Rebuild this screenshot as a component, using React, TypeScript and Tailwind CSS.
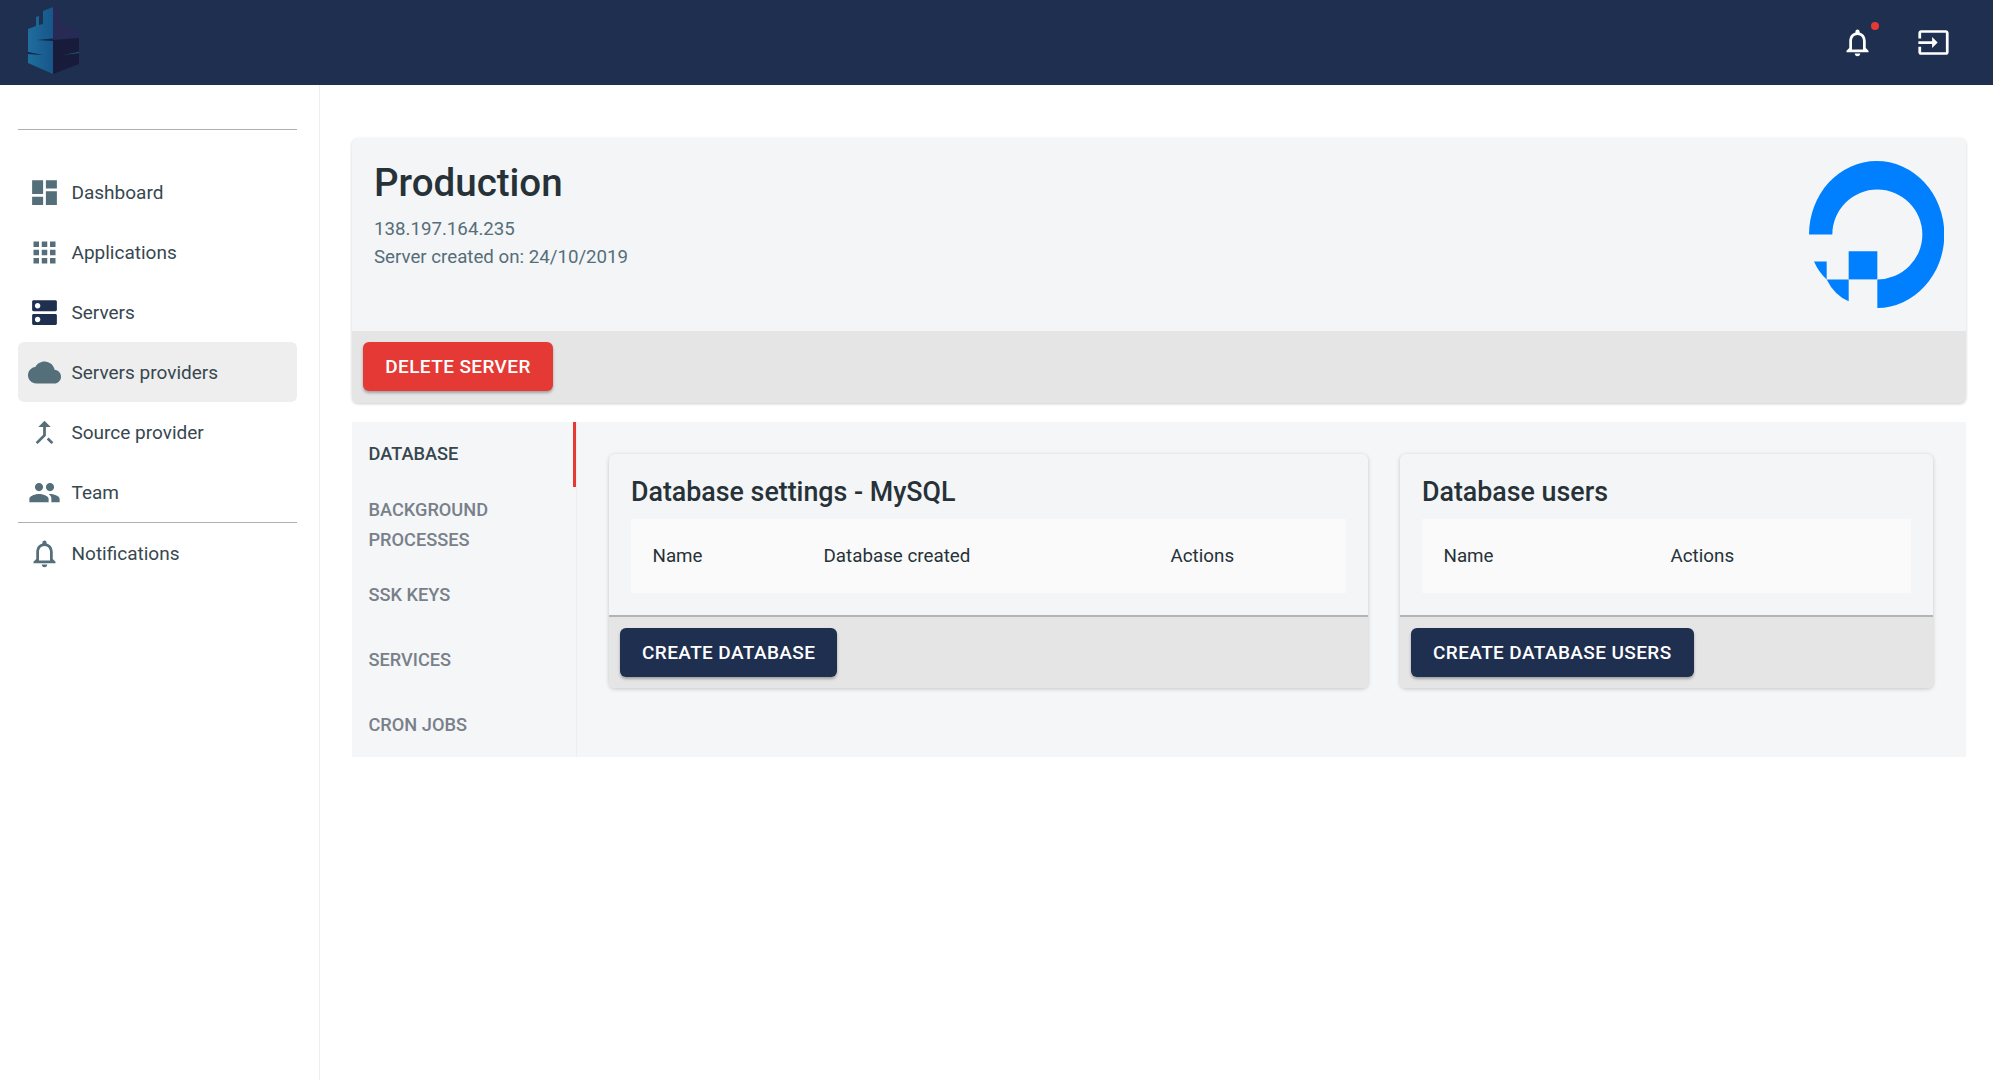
import React from 'react';

const ICONS: Record<string, string> = {
  dashboard: 'M3 13h8V3H3v10zm0 8h8v-6H3v6zm10 0h8V11h-8v10zm0-18v6h8V3h-8z',
  apps: 'M4 8h4V4H4v4zm6 12h4v-4h-4v4zm-6 0h4v-4H4v4zm0-6h4v-4H4v4zm6 0h4v-4h-4v4zm6-10v4h4V4h-4zm-6 4h4V4h-4v4zm6 6h4v-4h-4v4zm0 6h4v-4h-4v4z',
  dns: 'M20 13H4c-.55 0-1 .45-1 1v6c0 .55.45 1 1 1h16c.55 0 1-.45 1-1v-6c0-.55-.45-1-1-1zM7 19c-1.1 0-2-.9-2-2s.9-2 2-2 2 .9 2 2-.9 2-2 2zM20 3H4c-.55 0-1 .45-1 1v6c0 .55.45 1 1 1h16c.55 0 1-.45 1-1V4c0-.55-.45-1-1-1zM7 9c-1.1 0-2-.9-2-2s.9-2 2-2 2 .9 2 2-.9 2-2 2z',
  cloud: 'M19.35 10.04C18.67 6.59 15.64 4 12 4 9.11 4 6.6 5.64 5.35 8.04 2.34 8.36 0 10.91 0 14c0 3.31 2.69 6 6 6h13c2.76 0 5-2.24 5-5 0-2.64-2.05-4.78-4.65-4.96z',
  merge: 'M17 20.41L18.41 19 15 15.59 13.59 17 17 20.41zM7.5 8H11v5.59L5.59 19 7 20.41l6-6V8h3.5L12 3.5 7.5 8z',
  people: 'M16 11c1.66 0 2.99-1.34 2.99-3S17.66 5 16 5c-1.66 0-3 1.34-3 3s1.34 3 3 3zm-8 0c1.66 0 2.99-1.34 2.99-3S9.66 5 8 5C6.34 5 5 6.34 5 8s1.34 3 3 3zm0 2c-2.33 0-7 1.17-7 3.5V19h14v-2.5c0-2.33-4.67-3.5-7-3.5zm8 0c-.29 0-.62.02-.97.05 1.16.84 1.97 1.97 1.97 3.45V19h6v-2.5c0-2.33-4.67-3.5-7-3.5z',
  bell: 'M12 22c1.1 0 2-.9 2-2h-4c0 1.1.89 2 2 2zm6-6v-5c0-3.07-1.64-5.64-4.5-6.32V4c0-.83-.67-1.5-1.5-1.5s-1.5.67-1.5 1.5v.68C7.63 5.36 6 7.92 6 11v5l-2 2v1h16v-1l-2-2zm-2 1H8v-6c0-2.48 1.51-4.5 4-4.5s4 2.02 4 4.5v6z',
  input: 'M21 3.01H3c-1.1 0-2 .9-2 2V9h2V4.99h18v14.03H3V15H1v4.01c0 1.1.9 1.98 2 1.98h18c1.1 0 2-.88 2-1.98v-14c0-1.1-.9-2-2-2zM11 16l4-4-4-4v3H1v2h10v3z',
};

const Icon = ({ name, className }: { name: string; className?: string }) => (
  <svg viewBox="0 0 24 24" className={`w-[33px] h-[33px] fill-current shrink-0 ${className ?? ''}`}>
    <path d={ICONS[name]} />
  </svg>
);

const Logo = () => (
  <svg viewBox="0 0 70 85" className="w-[70px] h-[85px]">
    <defs>
      <linearGradient id="logoLeft" x1="0" y1="0" x2="1" y2="0">
        <stop offset="0" stopColor="#1f6d9e" />
        <stop offset="1" stopColor="#17568a" />
      </linearGradient>
    </defs>
    <path d="M8 29L16 26V17L19 16V25L23 24V11L33 7V74L8 63Z" fill="url(#logoLeft)" />
    <path d="M33 7L40 10V22L43 21L48 28L59 30V38L33 40Z" fill="#272a55" />
    <path d="M33 40L59 38V64L33 74Z" fill="#181c3a" />
    <path d="M17 40L33 38.5V41Z" fill="#14243f" />
    <path d="M8 52L23 55L8 54Z" fill="#14243f" />
    <path d="M43 55L59 52V53Z" fill="#1c6a8a" />
  </svg>
);

const DoLogo = () => (
  <svg viewBox="147 484 405 442" preserveAspectRatio="none" className="w-[135px] h-[147px] fill-[#0080ff]">
    <path d="M147 705A203 221 0 1 1 352 926V840A135 135 0 1 0 217 705Z" />
    <path d="M266 755H352V840H266Z" />
    <path d="M200 840H266V906Q222 886 200 840Z" />
    <path d="M162 786H200V840Q176 818 162 786Z" />
  </svg>
);

const NAV = [
  { label: 'Dashboard', icon: 'dashboard', color: 'text-[#546e7a]' },
  { label: 'Applications', icon: 'apps', color: 'text-[#546e7a]' },
  { label: 'Servers', icon: 'dns', color: 'text-[#1f2f50]' },
  { label: 'Servers providers', icon: 'cloud', color: 'text-[#546e7a]', active: true },
  { label: 'Source provider', icon: 'merge', color: 'text-[#546e7a]' },
  { label: 'Team', icon: 'people', color: 'text-[#546e7a]' },
];

const NavItem = ({ label, icon, color, active }: { label: string; icon: string; color: string; active?: boolean }) => (
  <div className={`h-[60px] flex items-center pl-[10px] rounded-md ${active ? 'bg-[#eeeeee]' : ''}`}>
    <Icon name={icon} className={color} />
    <span className="ml-[10.5px] pt-[2px] text-[19px] text-[#37474f]">{label}</span>
  </div>
);

const TABS = [
  { label: 'DATABASE', cls: 'h-[65px] pb-[2px] text-[#37474f] border-r-[3px] border-[#e53935]' },
  { label: 'BACKGROUND PROCESSES', cls: 'h-[76px] text-[#78808a]' },
  { label: 'SSK KEYS', cls: 'h-[65px] pb-[2px] text-[#78808a]' },
  { label: 'SERVICES', cls: 'h-[65px] pb-[2px] text-[#78808a]' },
  { label: 'CRON JOBS', cls: 'h-[64px] text-[#78808a]' },
];

const DbCard = ({ title, columns, button, className }: { title: string; columns: { label: string; cls: string }[]; button: string; className: string }) => (
  <div className={`rounded-md bg-[#f4f5f7] shadow-[0_1px_4px_rgba(0,0,0,0.2)] overflow-hidden ${className}`}>
    <div className="h-[163px] px-[22px] pt-[21px] border-b-2 border-[#b4b4b4]">
      <h2 className="text-[26.8px] leading-[34px] font-medium text-[#263238]">{title}</h2>
      <div className="mt-[10px] h-[74px] bg-[#fafafa] flex items-center pl-[21.5px] text-[18.8px] text-[#263238]">
        {columns.map(c => (
          <span key={c.label} className={c.cls}>{c.label}</span>
        ))}
      </div>
    </div>
    <div className="h-[71px] bg-[#e5e5e5] px-[11px] pt-[11px]">
      <button className="h-[49px] pt-[1px] px-[22px] rounded-md bg-[#1f2f50] text-white text-[19px] tracking-[0.4px] font-medium uppercase shadow-[0_2px_3px_rgba(0,0,0,0.3)]">
        {button}
      </button>
    </div>
  </div>
);

export default function App() {
  return (
    <div className="min-h-screen flex flex-col bg-white font-['Roboto',sans-serif]">
      <header className="h-[85px] bg-[#1f2f50] flex items-center justify-between pl-[20px] pr-[43px]">
        <Logo />
        <div className="flex items-center gap-[43px]">
          <div className="relative">
            <Icon name="bell" className="text-white" />
            <span className="absolute top-[-4px] right-[-5px] w-[8px] h-[8px] rounded-full bg-[#e53935]" />
          </div>
          <Icon name="input" className="text-white" />
        </div>
      </header>
      <div className="flex flex-1">
        <aside className="w-[320px] border-r border-[#eeeeee] px-[18px] pt-[44px]">
          <div className="w-[279px]">
            <div className="border-t border-[#b0b0b0] mb-[32px]" />
            {NAV.map(n => (
              <NavItem key={n.label} {...n} />
            ))}
            <div className="border-t border-[#b0b0b0]" />
            <NavItem label="Notifications" icon="bell" color="text-[#546e7a]" />
          </div>
        </aside>
        <main className="flex-1 pl-[32px] pr-[27px] pt-[53px]">
          <section className="rounded-md bg-[#f4f5f7] shadow-[0_1px_3px_rgba(0,0,0,0.2)] overflow-hidden">
            <div className="h-[193px] flex justify-between pl-[22px] pr-[22px] pt-[23px]">
              <div>
                <h1 className="text-[38.5px] leading-[44px] font-medium text-[#263238]">Production</h1>
                <p className="mt-[10px] text-[18.7px] leading-[28px] text-[#546e7a]">138.197.164.235</p>
                <p className="text-[18.7px] leading-[28px] text-[#546e7a]">Server created on: 24/10/2019</p>
              </div>
              <DoLogo />
            </div>
            <div className="h-[72px] bg-[#e5e5e5] px-[11px] pt-[11px]">
              <button className="h-[49px] pt-[1px] w-[190px] rounded-md bg-[#e53935] text-white text-[19px] tracking-[0.4px] font-medium uppercase shadow-[0_2px_3px_rgba(0,0,0,0.3)]">
                Delete server
              </button>
            </div>
          </section>
          <section className="mt-[19px] h-[335px] bg-[#f5f6f8] flex">
            <div className="w-[225px] border-r border-[#eceef0]">
              {TABS.map(t => (
                <div key={t.label} className={`flex items-center pl-[16.5px] pr-[40px] text-[18.2px] leading-[30px] font-medium ${t.cls}`}>
                  {t.label}
                </div>
              ))}
            </div>
            <div className="flex-1 flex gap-[32px] pl-[32px] pr-[33px] pt-[32px] items-start">
              <DbCard
                className="w-[759px]"
                title="Database settings - MySQL"
                button="Create database"
                columns={[
                  { label: 'Name', cls: 'w-[171px]' },
                  { label: 'Database created', cls: 'w-[347px]' },
                  { label: 'Actions', cls: '' },
                ]}
              />
              <DbCard
                className="w-[533px]"
                title="Database users"
                button="Create database users"
                columns={[
                  { label: 'Name', cls: 'w-[227px]' },
                  { label: 'Actions', cls: '' },
                ]}
              />
            </div>
          </section>
        </main>
      </div>
    </div>
  );
}
